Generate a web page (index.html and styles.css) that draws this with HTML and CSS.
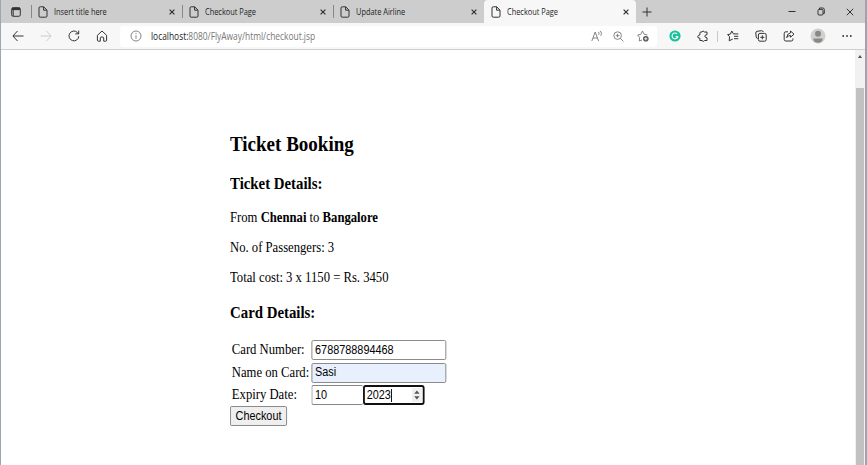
FILE: index.html
```html
<!DOCTYPE html>
<html lang="en">
<head>
<meta charset="utf-8">
<title>Checkout Page</title>
<link rel="stylesheet" href="styles.css">
</head>
<body>
<svg class="defs">
  <symbol id="page" viewBox="0 0 10 12"><path d="M1 2Q1 .8 2.2 .8H5.7L9 4.1V10Q9 11.2 7.8 11.2H2.2Q1 11.2 1 10ZM5.6 .9V4.2H8.9"/></symbol>
  <symbol id="close" viewBox="0 0 6 6"><path d="M.6 .6L5.4 5.4M5.4 .6L.6 5.4"/></symbol>
</svg>
<div class="window">
  <header class="tabs">
    <div class="tab-actions"><svg width="10" height="10" viewBox="0 0 10 10"><rect x=".7" y=".7" width="8.6" height="8.6" rx="1.5"/><path d="M1 1.9H9" stroke-width="2.4"/><path d="M2.2 3V9"/></svg></div>
    <div class="tab"><svg class="doc"><use href="#page"/></svg><span class="title">Insert title here</span><svg class="x"><use href="#close"/></svg></div>
    <div class="tab"><svg class="doc"><use href="#page"/></svg><span class="title">Checkout Page</span><svg class="x"><use href="#close"/></svg></div>
    <div class="tab"><svg class="doc"><use href="#page"/></svg><span class="title">Update Airline</span><svg class="x"><use href="#close"/></svg></div>
    <div class="tab active"><svg class="doc"><use href="#page"/></svg><span class="title">Checkout Page</span><svg class="x"><use href="#close"/></svg></div>
    <div class="new-tab"><svg width="10" height="10" viewBox="0 0 10 10"><path d="M5 .5V9.5M.5 5H9.5"/></svg></div>
    <div class="controls">
      <span><svg width="8" height="8" viewBox="0 0 8 8"><path d="M.5 3.5H7.5"/></svg></span>
      <span><svg width="8" height="9" viewBox="0 0 8 9"><rect x="1" y="2.4" width="5" height="5.6" rx="1"/><path d="M2.5 2V1H5.8Q7.3 1 7.3 2.5V6.5H6.2"/></svg></span>
      <span><svg width="8" height="8" viewBox="0 0 8 8"><path d="M.8 .8L7.2 7.2M7.2 .8L.8 7.2"/></svg></span>
    </div>
  </header>
  <nav class="toolbar">
    <span class="slot"><svg width="12" height="12" viewBox="0 0 12 12"><path d="M11.5 6H1M5.5 1L.9 6L5.5 11"/></svg></span>
    <span class="slot faded"><svg width="12" height="12" viewBox="0 0 12 12"><path d="M.5 6H11M6.5 1L11.1 6L6.5 11"/></svg></span>
    <span class="slot"><svg width="12" height="12" viewBox="0 0 12 12"><path d="M10.8 6.2A4.9 4.9 0 1 1 9.4 2.5L10.6 3.8M10.7 .6V3.9H7.3"/></svg></span>
    <span class="slot"><svg width="12" height="12" viewBox="0 0 12 12"><path d="M1.4 5.3L6 1L10.6 5.3V10.2Q10.6 11.2 9.7 11.2H7.7V7.8Q7.7 7 6 7T4.3 7.8V11.2H2.3Q1.4 11.2 1.4 10.2Z"/></svg></span>
    <div class="address">
      <svg class="info" width="12" height="12" viewBox="0 0 12 12"><circle cx="6" cy="6" r="5"/><path d="M6 5.3V8.8M6 3V4.1"/></svg>
      <span class="url"><b>localhost:</b>8080/FlyAway/html/checkout.jsp</span>
      <svg class="read" width="12" height="12" viewBox="0 0 12 12"><path d="M.8 11L4.2 2L7.6 11M2 8H6.4M7.4 1.8Q8.7 3.2 7.7 4.8M9.3 .8Q11.5 3.2 9.8 5.8"/></svg>
      <svg class="zoom" width="11" height="11" viewBox="0 0 11 11"><circle cx="4.6" cy="4.6" r="3.8"/><path d="M7.4 7.4L10.4 10.4M4.6 2.8V6.4M2.8 4.6H6.4"/></svg>
      <svg class="star" width="12" height="12" viewBox="0 0 12 12"><path d="M5 10L2.3 11L2.6 7.4L.6 5L3.8 4.3L5.5 1L7.2 4.3L10.4 5"/><circle class="badge" cx="8.8" cy="8.8" r="2.8"/><path class="plus" d="M8.8 7.3V10.3M7.3 8.8H10.3"/></svg>
    </div>
    <span class="slot"><svg width="12" height="12" viewBox="0 0 12 12"><circle class="green" cx="6" cy="6" r="5.6"/><path class="white" d="M8.2 4.1A2.9 2.9 0 1 0 8.8 6.6H6.6M8.6 6.6V8.3"/></svg></span>
    <span class="slot"><svg width="12" height="12" viewBox="0 0 12 12"><path d="M3.8 2H5Q6 -.1 7.4 2H10V4.7Q7.8 4.9 7.8 6.2T10 7.8V10.5H7.6Q6.2 12.5 5 10.5H2.9V8.2Q.2 8.3 .8 6.2Q1.3 4.9 2.9 5V3Q2.9 2 3.8 2Z"/></svg></span>
    <i class="rule"></i>
    <span class="slot"><svg width="12" height="12" viewBox="0 0 12 12"><path d="M6.3 3.8L4.8 1L3.4 4.1L.6 4.6L2.6 6.8L2.2 10.8L5.8 9M6.3 3.9H11.3M7 6.3H11.3M7 8.7H11.3"/></svg></span>
    <span class="slot"><svg width="12" height="12" viewBox="0 0 12 12"><path d="M2.7 8.5Q1.5 8.2 1.2 7L.8 3Q.8 1.6 2 1.3L6.5 .7Q8 .7 8.3 2"/><rect x="3.4" y="3.4" width="7.8" height="7.8" rx="1.6"/><path d="M7.3 5.3V9.3M5.3 7.3H9.3"/></svg></span>
    <span class="slot"><svg width="12" height="12" viewBox="0 0 12 12"><path d="M5 1.8H2.8Q1.2 1.8 1.2 3.4V9.4Q1.2 11 2.8 11H8.3Q9.9 11 9.9 9.4V8.4M7.5 1L11 4.2L7.5 7.2V5.5Q5 5.4 3.7 7.7Q4 3.4 7.5 2.8Z"/></svg></span>
    <span class="slot wide"><svg width="16" height="16" viewBox="0 0 16 16"><g class="avatar"><circle cx="8" cy="8" r="7.5"/><circle class="man" cx="8" cy="5.8" r="3"/><path class="man" d="M3.3 10.5H12.7Q12.5 14.7 8 14.7T3.3 10.5Z"/></g></svg></span>
    <span class="slot"><svg width="10" height="4" viewBox="0 0 10 4"><path class="dots" d="M1.2 2H1.21M5 2H5.01M8.8 2H8.81"/></svg></span>
  </nav>
  <div class="viewport">
    <main class="content">
      <h2>Ticket Booking</h2>
      <h3>Ticket Details:</h3>
      <p>From <b>Chennai</b> to <b>Bangalore</b></p>
      <p>No. of Passengers: 3</p>
      <p>Total cost: 3 x 1150 = Rs. 3450</p>
      <h3 class="card-title">Card Details:</h3>
      <form>
        <label>Card Number:</label><div class="field">6788788894468</div>
        <label>Name on Card:</label><div class="field filled">Sasi</div>
        <label>Expiry Date:</label>
        <div class="expiry"><div class="field month">10</div><div class="field year">2023<i class="caret"></i><svg class="spin" width="11" height="14" viewBox="0 0 11 14"><path d="M2.5 5.8L5.5 2.5L8.5 5.8ZM2.5 8.2L5.5 11.5L8.5 8.2Z"/></svg></div></div>
      </form>
      <button type="button">Checkout</button>
    </main>
    <aside class="scrollbar"><i class="arrow"></i><i class="thumb"></i></aside>
  </div>
</div>
</body>
</html>
```
FILE: styles.css
```css
* { box-sizing: border-box; }
body { margin: 0; overflow: hidden; background: #fff; }
svg { display: block; flex: none; fill: none; stroke: #333; stroke-width: 1; }
.defs { position: absolute; width: 0; height: 0; }
.window {
  width: 867px; height: 465px;
  border-left: 1px solid #9da5b1; border-right: 2px solid #9ba5ad;
  display: flex; flex-direction: column;
}
.tabs {
  height: 23px; background: #cdcdcd; display: flex; flex: none;
  font: 8.6px "Open Sans", "Noto Sans", sans-serif; color: #222;
}
.tab-actions { width: 30px; display: flex; align-items: center; justify-content: center; }
.tab {
  width: 151px; display: flex; align-items: center; padding: 0 7px;
  background: linear-gradient(#888, #888) no-repeat 0 5px / 1px 13px;
}
.doc { width: 10px; height: 12px; }
.x { width: 6px; height: 6px; stroke-width: 1.2; }
.title { flex: 1; margin-left: 6px; white-space: nowrap; transform: scaleX(.86); transform-origin: 0 50%; }
.active { width: 152px; background: #f7f7f7; border-radius: 4px 4px 0 0; }
.new-tab { width: 21px; display: flex; align-items: center; justify-content: center; }
.controls { margin-left: auto; margin-right: 1px; display: flex; }
.controls span { width: 29px; display: flex; align-items: center; justify-content: center; }
.toolbar {
  height: 27px; flex: none; display: flex; align-items: center; padding-left: 3px;
  background: #f7f7f7; border-bottom: 1px solid #cfcfcf;
}
.slot { width: 28px; display: flex; justify-content: center; }
.wide { width: 30px; }
.faded svg { stroke: #ccc; }
.rule { width: 1px; height: 11px; margin-right: 1px; background: #c8c8c8; }
.address {
  width: 537px; height: 21px; margin: 0 4px; padding-left: 10px;
  display: flex; align-items: center; border-radius: 3px; background: #fff;
}
.address svg { stroke: #777; stroke-width: .9; }
.url {
  flex: 1; margin-left: 9px; color: #777; white-space: nowrap;
  font: 10.3px "Open Sans", "Noto Sans", sans-serif;
  transform: scaleX(.815); transform-origin: 0 50%;
}
.url b { font-weight: 400; color: #222; }
.zoom { margin-left: 10px; }
.star { margin: 0 8px 0 13px; }
.address .badge { fill: #555; stroke: none; }
.address .plus { stroke: #fff; }
.green { fill: #15c39a; stroke: none; }
.white { stroke: #fff; stroke-width: 1.1; }
.avatar { fill: #d2d0ce; stroke: none; }
.man { fill: #8a8886; }
.dots { stroke-width: 1.8; stroke-linecap: round; }
.viewport { flex: 1; display: flex; min-height: 0; }
.content {
  width: 300px; padding-top: 82px; margin-left: 229px; color: #000;
  font: 14px/16px "Liberation Serif", serif;
  transform: scaleX(.905); transform-origin: 0 0;
}
h2 { font-size: 21px; line-height: 24px; margin: 0 0 18px; }
h3 { font-size: 16.4px; line-height: 20px; margin: 0 0 16px; }
p { margin: 0 0 14px; }
.card-title { margin: 17px 0 17px; }
form { display: grid; grid-template-columns: 88px 149px; gap: 2.5px 0; padding-left: 2px; }
label { line-height: 20px; white-space: nowrap; }
.field {
  height: 20px; padding: 0 3px 1px; display: flex; align-items: center;
  border: 1px solid #858585; border-radius: 2px; background: #fff;
  font: 12px "Liberation Sans", sans-serif;
}
.filled { background: #e8f0fe; }
.expiry { display: flex; }
.month { width: 57px; border-right: 0; }
.year { width: 68px; padding: 0 1px 0 2px; border: 2px solid #101010; border-radius: 3px; }
.caret { width: 1px; height: 13px; background: #000; }
.spin { margin-left: auto; background: #f0f0f0; fill: #555; stroke: none; }
button {
  display: block; width: 63px; height: 20px; margin-top: 1px; padding: 0;
  border: 1px solid #858585; border-radius: 2px; background: #efefef; color: #000;
  font: 12px "Liberation Sans", sans-serif;
}
.scrollbar {
  width: 10px; margin-left: auto; background: #f1f1f1;
  display: flex; flex-direction: column; align-items: center;
}
.arrow { margin-top: 5px; border: 2.5px solid transparent; border-top: 0; border-bottom: 3px solid #505050; }
.thumb { width: 8px; flex: 1; margin-top: 30px; background: #c1c1c1; }
```
